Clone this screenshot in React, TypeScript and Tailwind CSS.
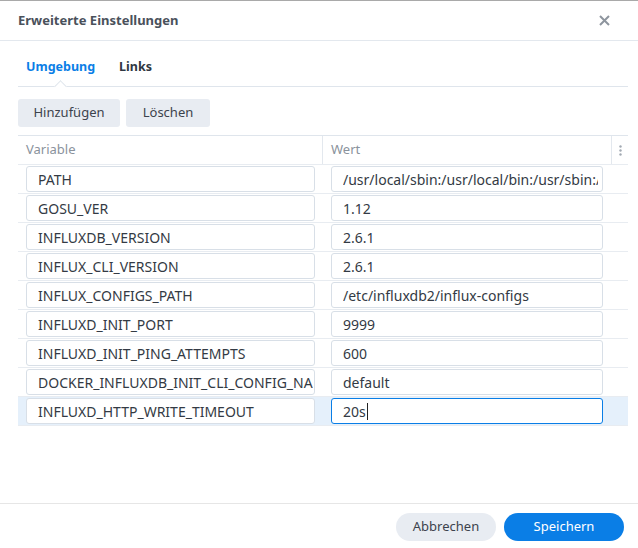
const rows = [
  ["PATH", "/usr/local/sbin:/usr/local/bin:/usr/sbin:/usr/bin:/sbin:/bin"],
  ["GOSU_VER", "1.12"],
  ["INFLUXDB_VERSION", "2.6.1"],
  ["INFLUX_CLI_VERSION", "2.6.1"],
  ["INFLUX_CONFIGS_PATH", "/etc/influxdb2/influx-configs"],
  ["INFLUXD_INIT_PORT", "9999"],
  ["INFLUXD_INIT_PING_ATTEMPTS", "600"],
  ["DOCKER_INFLUXDB_INIT_CLI_CONFIG_NAME", "default"],
  ["INFLUXD_HTTP_WRITE_TIMEOUT", "20s"],
];

export default function App() {
  return (
    <div
      className="flex h-[548px] w-[638px] flex-col bg-white text-[13px] text-[#333a44]"
      style={{ fontFamily: '"Noto Sans", "Open Sans", sans-serif' }}
    >
      {/* Title bar */}
      <div className="flex h-[41px] shrink-0 items-center justify-between border-t border-b border-t-[#a9a9a9] border-b-[#e3e8ee] pl-[18px] pr-[28px]">
        <span className="font-bold text-[#4a515b]">Erweiterte Einstellungen</span>
        <svg width="11" height="11" viewBox="0 0 11 11" className="text-[#8e959e]">
          <path d="M1 1L10 10M10 1L1 10" stroke="currentColor" strokeWidth="2" />
        </svg>
      </div>

      <div className="flex flex-1 flex-col pl-[18px] pr-[10px]">
        {/* Tabs */}
        <div className="relative flex gap-[24px] border-b border-[#dfe5ec] pl-[8px] pt-[16px] pb-[9px] text-[12.5px] font-bold leading-[20px]">
          <span className="text-[#0a7ee6]">Umgebung</span>
          <span className="text-[#2f3742]">Links</span>
          <span className="absolute left-[38px] top-[41px] h-[9px] w-[9px] rotate-45 border-t border-l border-[#dfe5ec] bg-white" />
        </div>

        {/* Toolbar */}
        <div className="mt-[12px] flex gap-[6px]">
          <button className="h-[28px] w-[102px] rounded-[3px] bg-[#e8ecf2] text-[#3c434d]">Hinzufügen</button>
          <button className="h-[28px] w-[84px] rounded-[3px] bg-[#e8ecf2] text-[#3c434d]">Löschen</button>
        </div>

        {/* Table */}
        <div className="mt-[8px] border-t border-[#dfe5ec]">
          <div className="grid grid-cols-[305px_289px_16px] border-b border-[#e8ecf1] text-[#8a929c]">
            <div className="flex h-[28px] items-center border-r border-[#e3e8ee] pl-[8px]">Variable</div>
            <div className="flex h-[28px] items-center border-r border-[#e3e8ee] pl-[8px]">Wert</div>
            <div className="flex h-[28px] items-center justify-center">
              <svg width="3" height="11" viewBox="0 0 3 11" className="text-[#a3aab3]">
                <circle cx="1.5" cy="1.5" r="1.2" fill="currentColor" />
                <circle cx="1.5" cy="5.5" r="1.2" fill="currentColor" />
                <circle cx="1.5" cy="9.5" r="1.2" fill="currentColor" />
              </svg>
            </div>
          </div>
          {rows.map(([name, value], i) => {
            const active = i === rows.length - 1;
            return (
              <div
                key={name}
                className={`grid h-[29px] grid-cols-[305px_289px_16px] items-center border-b border-[#e8ecf1] ${active ? "bg-[#e5f0fb]" : ""}`}
              >
                <div className="pl-[8px]">
                  <input
                    readOnly
                    defaultValue={name}
                    className="h-[26px] w-[289px] rounded-[3px] border border-[#d8dfe7] bg-white pl-[11px] pr-[1px] text-[14px] text-[#333a44] outline-none"
                  />
                </div>
                <div className="pl-[8px]">
                  {active ? (
                    <div className="flex h-[26px] w-[272px] items-center rounded-[3px] border border-[#0a7ee6] bg-white pl-[11px] text-[14px] text-[#333a44]">
                      <span>{value}</span>
                      <span className="ml-[1px] h-[17px] w-px bg-[#222]" />
                    </div>
                  ) : (
                    <input
                      readOnly
                      defaultValue={value}
                      className="h-[26px] w-[272px] rounded-[3px] border border-[#d8dfe7] bg-white pl-[11px] pr-[4px] text-[14px] text-[#333a44] outline-none"
                    />
                  )}
                </div>
                <div />
              </div>
            );
          })}
        </div>
        <div className="flex-1" />
      </div>

      {/* Footer */}
      <div className="flex h-[45px] shrink-0 justify-end gap-[8px] border-t border-[#e6e6e6] pr-[14px] pt-[9px]">
        <button className="h-[28px] w-[100px] rounded-full bg-[#e8ecf2] text-[#3c434d]">Abbrechen</button>
        <button className="h-[28px] w-[120px] rounded-full bg-[#0a7ee6] text-white">Speichern</button>
      </div>
    </div>
  );
}
